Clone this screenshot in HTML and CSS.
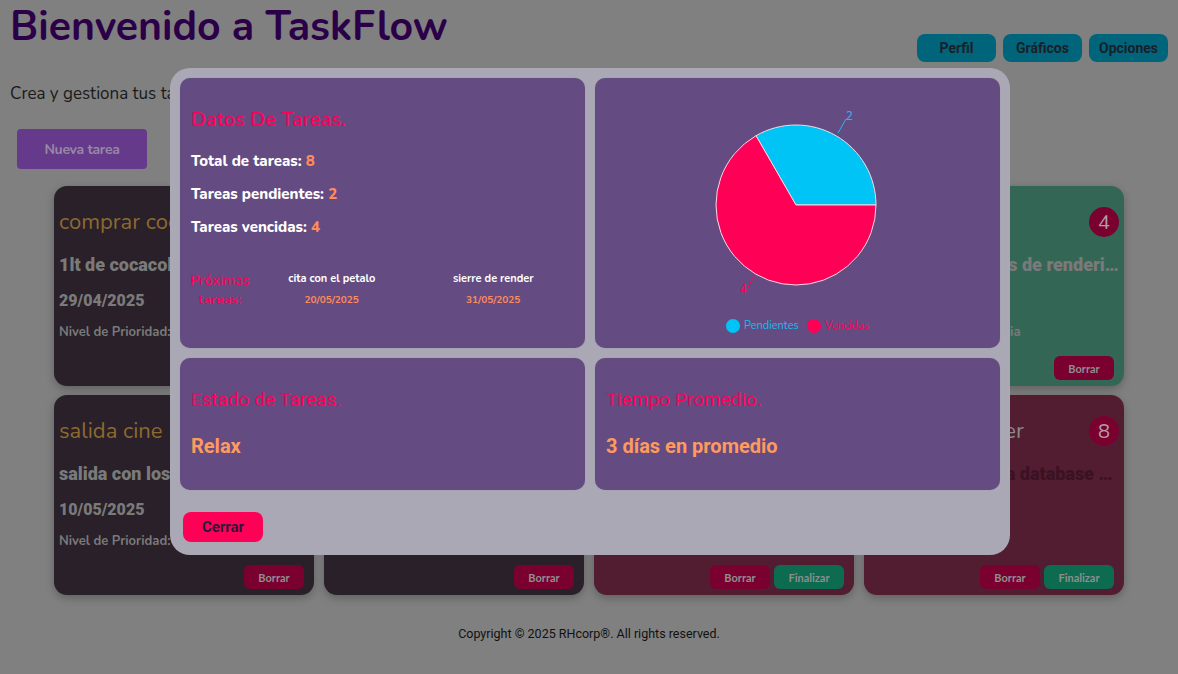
FILE: index.html
```html
<!DOCTYPE html>
<html lang="es">
<head>
<meta charset="utf-8">
<title>TaskFlow</title>
<link rel="stylesheet" href="styles.css">
</head>
<body>
<header class="topbar">
  <h1 class="brand">Bienvenido a TaskFlow</h1>
  <nav class="nav">
    <button class="nav-btn">Perfil</button>
    <button class="nav-btn">Gráficos</button>
    <button class="nav-btn">Opciones</button>
  </nav>
</header>
<p class="intro">Crea y gestiona tus tareas de forma sencilla.</p>
<button class="new-task">Nueva tarea</button>

<main class="tasks">
  <article class="task task-dark">
    <div class="task-head"><h2 class="task-title gold">comprar cocacola</h2></div>
    <p class="task-desc">1lt de cocacola para la cena</p>
    <p class="task-date">29/04/2025</p>
    <p class="task-prio">Nivel de Prioridad: Baja</p>
    <div class="task-actions"><button class="btn-del">Borrar</button></div>
  </article>
  <article class="task task-dark">
    <div class="task-head"><h2 class="task-title gold">estudiar examen</h2></div>
    <p class="task-desc">repasar temas de la unidad</p>
    <p class="task-date">05/05/2025</p>
    <p class="task-prio">Nivel de Prioridad: Media</p>
    <div class="task-actions"><button class="btn-del">Borrar</button></div>
  </article>
  <article class="task task-wine">
    <div class="task-head"><h2 class="task-title grey">cita con el petalo</h2><span class="badge">2</span></div>
    <p class="task-desc">cena en el restaurante</p>
    <p class="task-date">20/05/2025</p>
    <p class="task-prio">Nivel de Prioridad: Alta</p>
    <div class="task-actions"><button class="btn-del">Borrar</button><button class="btn-done">Finalizar</button></div>
  </article>
  <article class="task task-green">
    <div class="task-head"><h2 class="task-title green">mejor</h2><span class="badge">4</span></div>
    <p class="task-desc">revisar los ajustes de renderizado</p>
    <p class="task-date">&nbsp;</p>
    <p class="task-prio">Nivel de Prioridad: Media</p>
    <div class="task-actions"><button class="btn-del">Borrar</button></div>
  </article>

  <article class="task task-dark">
    <div class="task-head"><h2 class="task-title gold">salida cine</h2></div>
    <p class="task-desc">salida con los amigos</p>
    <p class="task-date">10/05/2025</p>
    <p class="task-prio">Nivel de Prioridad: Baja</p>
    <div class="task-actions"><button class="btn-del">Borrar</button></div>
  </article>
  <article class="task task-dark">
    <div class="task-head"><h2 class="task-title gold">lavar ropa</h2></div>
    <p class="task-desc">ropa blanca y oscura</p>
    <p class="task-date">12/05/2025</p>
    <p class="task-prio">Nivel de Prioridad: Baja</p>
    <div class="task-actions"><button class="btn-del">Borrar</button></div>
  </article>
  <article class="task task-wine">
    <div class="task-head"><h2 class="task-title grey">pagar servicios</h2><span class="badge">6</span></div>
    <p class="task-desc dark">luz, agua e internet</p>
    <p class="task-date">&nbsp;</p>
    <p class="task-prio">&nbsp;</p>
    <div class="task-actions"><button class="btn-del">Borrar</button><button class="btn-done">Finalizar</button></div>
  </article>
  <article class="task task-wine">
    <div class="task-head"><h2 class="task-title grey">sierre de render</h2><span class="badge">8</span></div>
    <p class="task-desc dark">respaldar ahora la database completa</p>
    <p class="task-date">&nbsp;</p>
    <p class="task-prio">&nbsp;</p>
    <div class="task-actions"><button class="btn-del">Borrar</button><button class="btn-done">Finalizar</button></div>
  </article>
</main>

<footer class="footer">Copyright © 2025 RHcorp®. All rights reserved.</footer>

<div class="modal">
  <div class="modal-grid">
    <section class="panel panel-data">
      <h3 class="panel-title">Datos De Tareas.</h3>
      <p class="stat">Total de tareas: <span class="num">8</span></p>
      <p class="stat">Tareas pendientes: <span class="num">2</span></p>
      <p class="stat">Tareas vencidas: <span class="num">4</span></p>
      <div class="upcoming">
        <span class="up-label">Próximas tareas:</span>
        <div class="up-item"><span class="up-name">cita con el petalo</span><span class="up-date">20/05/2025</span></div>
        <div class="up-item"><span class="up-name">sierre de render</span><span class="up-date">31/05/2025</span></div>
      </div>
    </section>
    <section class="panel panel-chart">
      <svg class="pie" width="405" height="232" viewBox="0 0 405 232">
        <path d="M201 127 L281 127 A80 80 0 0 0 161 57.72 Z" fill="#00c3f6" stroke="#f2dbe6" stroke-width="1"/>
        <path d="M201 127 L161 57.72 A80 80 0 1 0 281 127 Z" fill="#fe0157" stroke="#f2dbe6" stroke-width="1"/>
        <line x1="243" y1="55" x2="251" y2="41" stroke="#1bbaf0" stroke-width="1"/>
        <text x="251" y="42" class="pie-lbl" fill="#1bbaf0">2</text>
        <line x1="160" y1="197" x2="153" y2="209" stroke="#fe0157" stroke-width="1"/>
        <text x="145" y="215" class="pie-lbl" fill="#fe0157">4</text>
      </svg>
      <div class="legend">
        <span class="leg leg-blue"><i class="dot dot-blue"></i>Pendientes</span>
        <span class="leg leg-red"><i class="dot dot-red"></i>Vencidas</span>
      </div>
    </section>
    <section class="panel panel-small">
      <h3 class="small-title">Estado de Tareas.</h3>
      <p class="small-value">Relax</p>
    </section>
    <section class="panel panel-small">
      <h3 class="small-title">Tiempo Promedio.</h3>
      <p class="small-value">3 días en promedio</p>
    </section>
  </div>
  <button class="close-btn">Cerrar</button>
</div>
</body>
</html>
```

FILE: styles.css
```css
* { box-sizing: border-box; }

body {
  margin: 0;
  padding: 0 10px;
  background: #808080;
  font-family: "Nunito", "Noto Sans", sans-serif;
  width: 1178px;
  height: 674px;
  overflow: hidden;
}

.topbar {
  display: flex;
  justify-content: space-between;
  align-items: flex-start;
}

.brand {
  margin: 0;
  padding-top: 2px;
  font-size: 41px;
  line-height: 50px;
  font-weight: 700;
  color: #2b0048;
}

.nav {
  display: flex;
  gap: 7px;
  padding-top: 34px;
}

.nav-btn {
  width: 79px;
  height: 28px;
  border: none;
  border-radius: 8px;
  background: #00647a;
  color: #1b1f2a;
  font-family: "Roboto", sans-serif;
  font-weight: 700;
  font-size: 14px;
  padding: 0;
}

.intro {
  margin: 20px 0 0;
  font-size: 17px;
  line-height: 24px;
  color: #1a1a1a;
}

.new-task {
  margin: 23px 0 0 7px;
  width: 130px;
  height: 40px;
  border: none;
  border-radius: 4px;
  background: #653a8a;
  color: #9a87a8;
  font-family: "Nunito", "Noto Sans", sans-serif;
  font-weight: 700;
  font-size: 14px;
  letter-spacing: -0.3px;
}

.tasks {
  width: 1070px;
  margin: 17px auto 0;
  display: grid;
  grid-template-columns: repeat(4, 260px);
  grid-auto-rows: 200px;
  gap: 9px 10px;
}

.task {
  border-radius: 13px;
  padding: 20px 5px 5px;
  display: flex;
  flex-direction: column;
  box-shadow: 0 3px 8px rgba(0,0,0,0.25);
  overflow: hidden;
}
.task-dark { background: #292029; }
.task-green { background: #346656; }
.task-wine { background: #521d30; }

.task-head {
  display: flex;
  justify-content: space-between;
  align-items: center;
  height: 32px;
}

.task-title {
  margin: 0;
  font-size: 22px;
  font-weight: 400;
  white-space: nowrap;
  overflow: hidden;
  text-overflow: ellipsis;
}
.gold { color: #8c6a30; }
.grey { color: #8a8a8a; }
.green { color: #0a8758; }

.badge {
  width: 30px;
  height: 30px;
  flex: none;
  border-radius: 50%;
  background: #7a0030;
  color: #b0a0a6;
  font-size: 20px;
  display: flex;
  align-items: center;
  justify-content: center;
}

.task-desc {
  margin: 16px 0 0;
  font-family: "Roboto", sans-serif;
  font-weight: 900;
  font-size: 18px;
  color: #7a7a7a;
  white-space: nowrap;
  overflow: hidden;
  text-overflow: ellipsis;
}
.task-desc.dark { color: #3b1222; }

.task-date {
  margin: 16px 0 0;
  font-family: "Roboto", sans-serif;
  font-weight: 900;
  font-size: 16px;
  color: #7a7a7a;
}

.task-prio {
  margin: 13px 0 0;
  font-weight: 700;
  font-size: 13px;
  color: #7a7a7a;
  white-space: nowrap;
}

.task-actions {
  margin-top: auto;
  display: flex;
  justify-content: flex-end;
  gap: 4px;
  padding: 0 5px 1px 0;
}

.btn-del, .btn-done {
  height: 24px;
  border: none;
  border-radius: 6px;
  font-family: "Lato", sans-serif;
  font-weight: 700;
  font-size: 11px;
  color: #8e8e8e;
}
.btn-del { width: 60px; background: #7a0030; }
.btn-done { width: 70px; background: #0d6b4f; }

.footer {
  margin-top: 31px;
  text-align: center;
  font-family: "Roboto", sans-serif;
  font-size: 12.5px;
  color: #111;
}

.modal {
  position: fixed;
  top: 68px;
  left: 170px;
  width: 840px;
  height: 487px;
  background: #aba8b5;
  border-radius: 20px;
  padding: 10px;
}

.modal-grid {
  display: grid;
  grid-template-columns: 405px 405px;
  grid-template-rows: 270px 132px;
  gap: 10px;
}

.panel {
  background: #644c82;
  border-radius: 10px;
  box-shadow: 0 0 1px rgba(0,0,0,0.2);
}

.panel-data {
  padding: 28px 11px 0;
}

.panel-title {
  margin: 0;
  font-size: 20px;
  line-height: 28px;
  font-weight: 600;
  color: #fe0157;
}

.stat {
  margin: 16px 0 0;
  font-size: 15px;
  line-height: 23px;
  font-weight: 800;
  color: #fff;
}
.stat + .stat { margin-top: 10px; }
.num { color: #ff8a5c; }

.upcoming {
  display: flex;
  margin-top: 32px;
}

.up-label {
  width: 62px;
  flex: none;
  text-align: center;
  font-size: 14px;
  line-height: 19px;
  font-weight: 600;
  color: #fe0157;
  margin-left: -2px;
}

.up-item {
  flex: 1;
  display: flex;
  flex-direction: column;
  align-items: center;
  gap: 7px;
}

.up-name {
  font-size: 11px;
  font-weight: 700;
  color: #fff;
}

.up-date {
  font-size: 10px;
  font-weight: 700;
  color: #ff8a5c;
}

.panel-chart {
  display: flex;
  flex-direction: column;
}

.pie { display: block; }

.pie-lbl {
  font-family: "Noto Sans", sans-serif;
  font-size: 12px;
}

.legend {
  display: flex;
  justify-content: center;
  gap: 8px;
  margin-top: 8px;
  font-size: 11px;
}

.leg {
  display: flex;
  align-items: center;
  gap: 4px;
}
.leg-blue { color: #1bbaf0; }
.leg-red { color: #fe0157; }

.dot {
  width: 14px;
  height: 14px;
  border-radius: 50%;
  display: inline-block;
}
.dot-blue { background: #00c3f6; }
.dot-red { background: #fe0157; }

.panel-small {
  padding: 30px 11px 0;
  font-family: "Roboto", "Noto Sans", sans-serif;
}

.small-title {
  margin: 0;
  font-size: 19px;
  font-weight: 400;
  color: #fe0157;
}

.small-value {
  margin: 23px 0 0;
  font-size: 20px;
  font-weight: 700;
  color: #ff9a5e;
}

.close-btn {
  margin: 22px 0 0 3px;
  width: 80px;
  height: 30px;
  border: none;
  border-radius: 8px;
  background: #fe0157;
  color: #2a1a3a;
  font-family: "Roboto", "Noto Sans", sans-serif;
  font-weight: 700;
  font-size: 15px;
}
```
